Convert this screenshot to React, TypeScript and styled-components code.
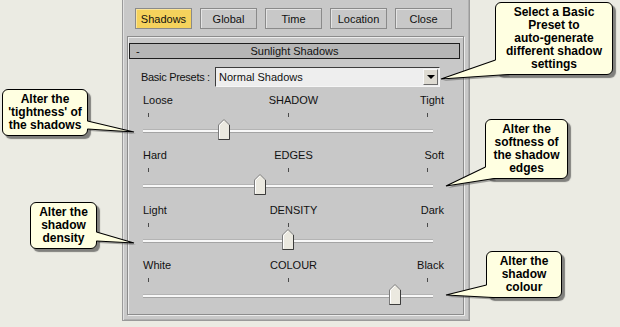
import React from 'react';
import styled, { createGlobalStyle } from 'styled-components';

type Pt = [number, number];

type SliderDef = {
  left: string;
  title: string;
  right: string;
  value: number;
};

type CalloutDef = {
  id: string;
  left: number;
  top: number;
  width: number;
  lines: string[];
  tail: [Pt, Pt, Pt, Pt];
};

const tabs = ['Shadows', 'Global', 'Time', 'Location', 'Close'];

const sliders: SliderDef[] = [
  { left: 'Loose', title: 'SHADOW', right: 'Tight', value: 0.272 },
  { left: 'Hard', title: 'EDGES', right: 'Soft', value: 0.4 },
  { left: 'Light', title: 'DENSITY', right: 'Dark', value: 0.5 },
  { left: 'White', title: 'COLOUR', right: 'Black', value: 0.882 }
];

const callouts: CalloutDef[] = [
  {
    id: 'preset',
    left: 495,
    top: 2,
    width: 118,
    lines: ['Select a Basic', 'Preset to', 'auto-generate', 'different shadow', 'settings'],
    tail: [[495.5, 60], [441, 79], [508, 74.5], [508, 62]]
  },
  {
    id: 'tight',
    left: 2,
    top: 89,
    width: 86,
    lines: ['Alter the', "'tightness' of", 'the shadows'],
    tail: [[87.5, 121], [134, 132], [87.5, 129], [80, 125]]
  },
  {
    id: 'soft',
    left: 485,
    top: 119,
    width: 83,
    lines: ['Alter the', 'softness of', 'the shadow', 'edges'],
    tail: [[485.5, 167], [446, 186], [494, 178.5], [494, 168]]
  },
  {
    id: 'density',
    left: 30,
    top: 202,
    width: 67,
    lines: ['Alter the', 'shadow', 'density'],
    tail: [[96.5, 232], [134, 243], [96.5, 241], [90, 236]]
  },
  {
    id: 'colour',
    left: 486,
    top: 251,
    width: 76,
    lines: ['Alter the', 'shadow', 'colour'],
    tail: [[486.5, 285], [446, 295], [493, 297.5], [494, 287]]
  }
];

const GlobalStyle = createGlobalStyle`
  html, body {
    margin: 0;
    padding: 0;
  }
  body {
    background: #ebebe3;
    font-family: "Liberation Sans", Arial, sans-serif;
    color: #111;
  }
`;

const Page = styled.div`
  position: relative;
  width: 620px;
  height: 327px;
  overflow: hidden;
  background: #ebebe3;
`;

const Panel = styled.div`
  margin-left: 122px;
  width: 348px;
  height: 321px;
  box-sizing: border-box;
  background: #c8c8c8;
  border: 1px solid #9a9a9a;
  border-top: none;
  box-shadow: inset 1px 0 0 #e2e2e2, inset -1px -1px 0 #b0b0b0;
  padding-top: 8px;
`;

const ButtonBar = styled.div`
  display: flex;
  gap: 8px;
  padding-left: 12px;
`;

const TabButton = styled.div<{ $active?: boolean }>`
  width: 57px;
  height: 21px;
  box-sizing: border-box;
  display: flex;
  align-items: center;
  justify-content: center;
  font-size: 11px;
  border: 1px solid #8a8a8a;
  background: ${({ $active }) => ($active ? '#f5d25c' : '#c8c8c8')};
  box-shadow: inset 1px 1px 0 ${({ $active }) => ($active ? '#fbe49a' : '#e4e4e4')};
`;

const RolloutFrame = styled.div`
  margin: 7px 0 0 4px;
  width: 337px;
  height: 279px;
  box-sizing: border-box;
  border: 1px solid #8c8c8c;
  box-shadow: inset 1px 1px 0 #ececec, 1px 1px 0 #ececec;
`;

const RolloutHeader = styled.div`
  margin: 6px 3px 0 1px;
  height: 16px;
  box-sizing: border-box;
  border: 1px solid #1e1e1e;
  background: #b6b6b6;
  display: grid;
  grid-template-columns: 1fr auto 1fr;
  align-items: center;
  font-size: 11px;
  line-height: 14px;
`;

const Collapse = styled.span`
  padding-left: 6px;
`;

const PresetsRow = styled.div`
  margin-top: 8px;
  height: 20px;
  display: flex;
  align-items: center;
  padding-left: 13px;
  font-size: 11px;
`;

const PresetsLabel = styled.span`
  width: 74px;
  white-space: nowrap;
  letter-spacing: -0.3px;
`;

const Dropdown = styled.div`
  width: 225px;
  height: 20px;
  box-sizing: border-box;
  display: flex;
  align-items: center;
  padding: 0 1px 0 3px;
  background: #eeeeee;
  border-top: 1px solid #3c3c3c;
  border-left: 1px solid #3c3c3c;
  border-bottom: 1px solid #f6f6f6;
  border-right: 1px solid #f6f6f6;
`;

const DropdownArrow = styled.div`
  margin-left: auto;
  width: 15px;
  height: 16px;
  box-sizing: border-box;
  display: flex;
  align-items: center;
  justify-content: center;
  background: #dedbd2;
  border-top: 1px solid #f8f8f8;
  border-left: 1px solid #f8f8f8;
  border-right: 1px solid #6a6a6a;
  border-bottom: 1px solid #6a6a6a;

  &::after {
    content: '';
    border-left: 4px solid transparent;
    border-right: 4px solid transparent;
    border-top: 4px solid #000;
  }
`;

const SliderList = styled.div`
  margin: 7px 0 0 15px;
`;

const SliderGroup = styled.div`
  height: 55px;
`;

const LabelRow = styled.div`
  width: 301px;
  height: 13px;
  display: grid;
  grid-template-columns: 1fr auto 1fr;
  font-size: 11px;
  line-height: 13px;
`;

const Label = styled.span<{ $align: 'left' | 'center' | 'right' }>`
  text-align: ${({ $align }) => $align};
  white-space: nowrap;
`;

const TickRow = styled.div`
  margin-top: 6px;
  width: 290px;
  height: 4px;
  box-sizing: border-box;
  padding: 0 5px;
  display: flex;
  justify-content: space-between;
`;

const Tick = styled.span`
  width: 1px;
  height: 4px;
  background: #4a4a4a;
`;

const TrackArea = styled.div`
  position: relative;
  margin-top: 2px;
  width: 290px;
  height: 21px;
  box-sizing: border-box;
  padding-top: 11px;
`;

const TrackLine = styled.div`
  height: 2px;
  background: #f8f8f8;
  box-shadow: 0 -1px 0 #b4b4b4, 0 1px 0 #a4a4a4;
`;

const Thumb = styled.svg`
  position: absolute;
  top: 0;
  width: 12px;
  height: 21px;
`;

const Callout = styled.div<{ $left: number; $top: number; $width: number }>`
  position: absolute;
  left: ${({ $left }) => $left}px;
  top: ${({ $top }) => $top}px;
  width: ${({ $width }) => $width}px;
  box-sizing: border-box;
  padding: 3px 0;
  background: #ffffe1;
  border: 1px solid #000;
  border-radius: 6px;
  box-shadow: 3px 3px 1px rgba(70, 70, 70, 0.65);
  font-size: 12px;
  font-weight: bold;
  line-height: 13px;
  text-align: center;
  color: #000;
  white-space: nowrap;
  z-index: 2;
`;

const TailLayer = styled.svg<{ $z: number }>`
  position: absolute;
  left: 0;
  top: 0;
  width: 620px;
  height: 327px;
  pointer-events: none;
  z-index: ${({ $z }) => $z};
`;

const pts = (list: Pt[], dx = 0, dy = 0) =>
  list.map(([x, y]) => `${x + dx},${y + dy}`).join(' ');

const Slider = ({ def }: { def: SliderDef }) => (
  <SliderGroup>
    <LabelRow>
      <Label $align='left'>{def.left}</Label>
      <Label $align='center'>{def.title}</Label>
      <Label $align='right'>{def.right}</Label>
    </LabelRow>
    <TickRow>
      <Tick />
      <Tick />
      <Tick />
    </TickRow>
    <TrackArea>
      <TrackLine />
      <Thumb viewBox='0 0 12 21' style={{ left: 5 + def.value * 280 - 6 }}>
        <polygon points='0.5,6 6,0.5 11.5,6 11.5,20.5 0.5,20.5' fill='#ebe9e0' stroke='#7c7c7c' />
        <polyline points='1.5,19.5 1.5,6.4 6,1.9' fill='none' stroke='#ffffff' />
        <polyline points='11.5,6 11.5,20.5 0.5,20.5' fill='none' stroke='#3c3c3c' />
      </Thumb>
    </TrackArea>
  </SliderGroup>
);

const App = () => {
  return (
    <Page>
      <GlobalStyle />
      <Panel>
        <ButtonBar>
          {tabs.map((t) => (
            <TabButton key={t} $active={t === 'Shadows'}>{t}</TabButton>
          ))}
        </ButtonBar>
        <RolloutFrame>
          <RolloutHeader>
            <Collapse>-</Collapse>
            <span>Sunlight Shadows</span>
            <span />
          </RolloutHeader>
          <PresetsRow>
            <PresetsLabel>Basic Presets :</PresetsLabel>
            <Dropdown>
              <span>Normal Shadows</span>
              <DropdownArrow />
            </Dropdown>
          </PresetsRow>
          <SliderList>
            {sliders.map((s) => (
              <Slider key={s.title} def={s} />
            ))}
          </SliderList>
        </RolloutFrame>
      </Panel>

      <TailLayer $z={1} viewBox='0 0 620 327'>
        {callouts.map((c) => (
          <polygon key={c.id} points={pts([c.tail[0], c.tail[1], c.tail[2]], 2, 2)} fill='rgba(70,70,70,0.45)' />
        ))}
      </TailLayer>

      {callouts.map((c) => (
        <Callout key={c.id} $left={c.left} $top={c.top} $width={c.width}>
          {c.lines.map((l) => (
            <div key={l}>{l}</div>
          ))}
        </Callout>
      ))}

      <TailLayer $z={3} viewBox='0 0 620 327'>
        {callouts.map((c) => (
          <g key={c.id}>
            <polygon points={pts(c.tail)} fill='#ffffe1' />
            <polyline points={pts([c.tail[0], c.tail[1], c.tail[2]])} fill='none' stroke='#000' strokeWidth={1.1} />
          </g>
        ))}
      </TailLayer>
    </Page>
  );
};

export default App;
